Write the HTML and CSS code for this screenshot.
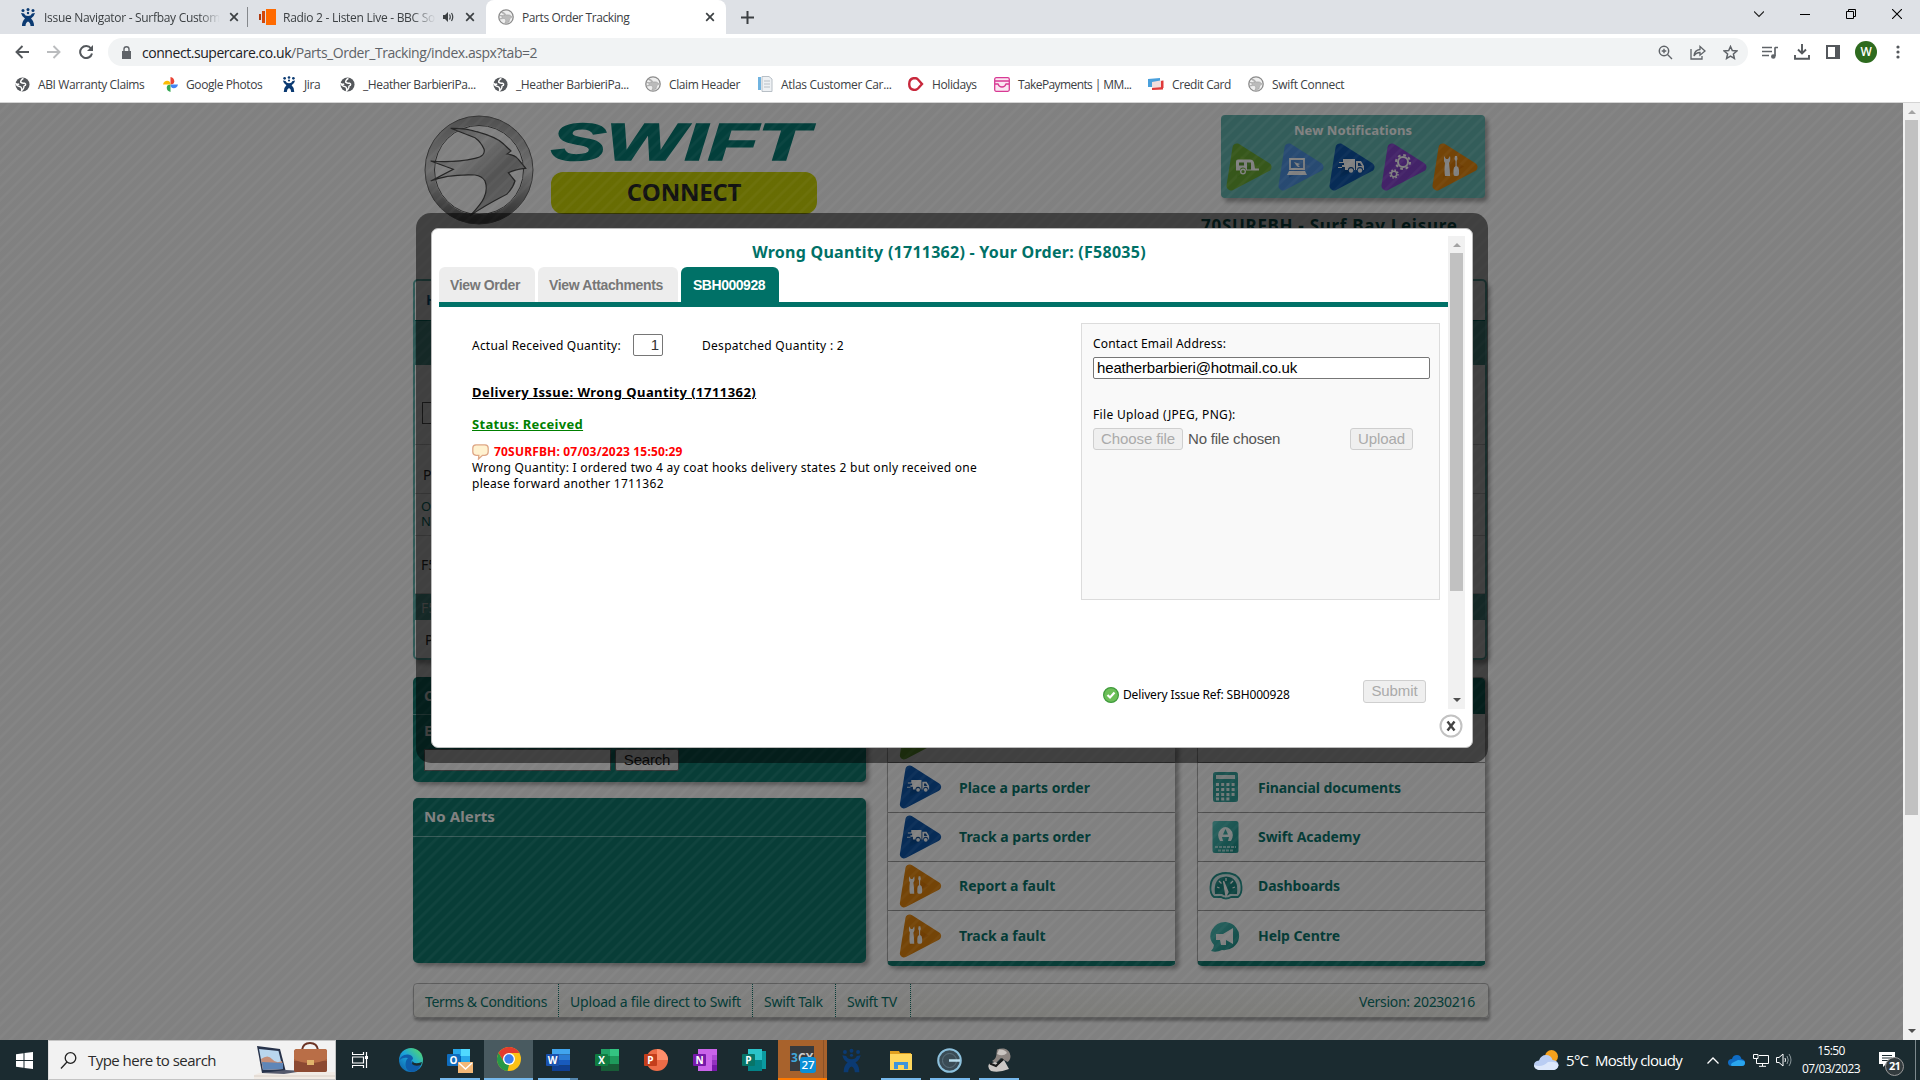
FILE: index.html
```html
<!DOCTYPE html>
<html lang="en">
<head>
<meta charset="utf-8">
<title>Parts Order Tracking</title>
<link rel="stylesheet" href="styles.css">
</head>
<body>
<svg class="defs" width="0" height="0" aria-hidden="true">
  <defs>
    <linearGradient id="g-green" x1="0" y1="1" x2="1" y2="0"><stop offset="0" stop-color="#4f9a1e"/><stop offset="1" stop-color="#8bc53f"/></linearGradient>
    <linearGradient id="g-sky" x1="0" y1="1" x2="1" y2="0"><stop offset="0" stop-color="#1668c4"/><stop offset="1" stop-color="#8fb8ee"/></linearGradient>
    <linearGradient id="g-navy" x1="0" y1="0" x2="0" y2="1"><stop offset="0" stop-color="#0a5fc0"/><stop offset="0.5" stop-color="#003f88"/><stop offset="1" stop-color="#0a5cb4"/></linearGradient>
    <linearGradient id="g-purple" x1="0" y1="0" x2="0" y2="1"><stop offset="0" stop-color="#9a4fe0"/><stop offset="1" stop-color="#6d2fb8"/></linearGradient>
    <linearGradient id="g-orange" x1="0" y1="0" x2="1" y2="1"><stop offset="0" stop-color="#f09010"/><stop offset="0.6" stop-color="#d87400"/><stop offset="1" stop-color="#e88600"/></linearGradient>
    <linearGradient id="g-metal" x1="0" y1="0" x2="1" y2="1"><stop offset="0" stop-color="#8e8e8e"/><stop offset="0.35" stop-color="#e2e2e2"/><stop offset="0.6" stop-color="#a4a4a4"/><stop offset="1" stop-color="#d0d0d0"/></linearGradient>
    <linearGradient id="g-ring" x1="0" y1="0" x2="0" y2="1"><stop offset="0" stop-color="#a0a0a0"/><stop offset="0.5" stop-color="#dadada"/><stop offset="1" stop-color="#5a5a5a"/></linearGradient>
    <linearGradient id="g-teal" x1="0" y1="0" x2="1" y2="1"><stop offset="0" stop-color="#55c8c2"/><stop offset="1" stop-color="#108880"/></linearGradient>
    <linearGradient id="g-edge" x1="0" y1="1" x2="1" y2="0"><stop offset="0" stop-color="#0c59a4"/><stop offset="0.5" stop-color="#1ba5dc"/><stop offset="1" stop-color="#5fe05a"/></linearGradient>
    <symbol id="van" viewBox="0 0 24 16"><path d="M1 12V3Q1 1 3 1H15Q18 1 19 4L20 10H24V12H11A3 3 0 0 0 5 12Z" fill="#fff"/><path d="M4 4H9V7H4ZM12 4H16V11H12Z" fill="#5b9b2c"/><circle cx="8" cy="13" r="2.3" fill="none" stroke="#fff" stroke-width="1.4"/></symbol>
    <symbol id="laptop" viewBox="0 0 20 18"><path d="M3 1H17V11H3Z" fill="none" stroke="#fff" stroke-width="1.8"/><path d="M2 13H18L20 17H0Z" fill="#fff"/><path d="M7 4L13 6L11 7L13 9L11 9L9 7Z" fill="#fff"/></symbol>
    <symbol id="truck" viewBox="0 0 27 16"><path d="M5 1H17V12H16A3 3 0 0 0 10 12H7V9H4V7H6V5H1V4H5ZM18 3H23L26 8V12H25A3 3 0 0 0 19 12H18Z" fill="#fff"/><circle cx="13" cy="12.500" r="2.200" fill="#fff"/><circle cx="22" cy="12.500" r="2.200" fill="#fff"/><path d="M20 5H22L24 8H20Z" fill="#0a4a98"/><path d="M0 9.500H4" stroke="#fff"/></symbol>
    <symbol id="gears" viewBox="0 0 24 26"><g fill="none" stroke="#fff"><circle cx="14" cy="8" r="5" stroke-width="2"/><circle cx="14" cy="8" r="7" stroke-width="2" stroke-dasharray="2.750"/><circle cx="5" cy="20" r="2.700" stroke-width="1.500"/><circle cx="5" cy="20" r="4" stroke-width="1.500" stroke-dasharray="1.570"/></g></symbol>
    <symbol id="tools" viewBox="0 0 16 21"><path d="M0 0L2 3H4L6 0Q7 5 5 7Q6 14 6 20H1Q0 14 1 7Q-1 4 0 0ZM11 0H13L13.500 3L12.700 5V10Q15 11 15 14V18Q15 20 13 20H11Q9.500 20 9.500 18V14Q9.500 11 11.500 10V5L10.500 3Z" fill="#fff"/></symbol>
    <symbol id="tri" viewBox="0 0 46 48"><path d="M11 5L41 24L5 43Z" stroke="inherit" stroke-width="9" stroke-linejoin="round"/></symbol>
    <symbol id="globe" viewBox="0 0 16 16"><circle cx="8" cy="8" r="7.500" fill="#55585c"/><path d="M9 1.500Q6 3 6 5.500Q8 7 10 6.500Q12 7 11 9Q9 9.500 9.500 11Q9 13 7 14.500Q7.500 11.500 6 10.500Q2 10 1 7Q3 8 4.500 7.500" fill="none" stroke="#fff" stroke-width="1.500"/></symbol>
    <symbol id="jira" viewBox="0 0 16 18"><g fill="#0b3a72"><circle cx="3" cy="2.500" r="1.500"/><circle cx="8" cy="1.500" r="1.500"/><circle cx="13" cy="2.500" r="1.500"/><path d="M1 5L4 5.500Q5 8 8 8Q11 8 12 5.500L15 5Q14 9 11 10.500Q14 13 14 18H10.500Q10.500 14.500 8 13.500Q5.500 14.500 5.500 18H2Q2 13 5 10.500Q2 9 1 5Z"/></g><circle cx="8" cy="5" r="1.200" fill="#0b3a72"/></symbol>
    <symbol id="coin" viewBox="0 0 16 16"><circle cx="8" cy="8" r="7.200" fill="#eee" stroke="#8b8b8b" stroke-width="1.300"/><path d="M3 3Q7 3 8 6Q12 5 14 8Q11 9 11 13L7 14Q9 10 6 9.500L2 10L5 8L2 6.500L7 6.500Q5 4 3 3Z" fill="#bbb" stroke="#999" stroke-width=".5"/></symbol>
    <symbol id="close" viewBox="0 0 10 10"><path d="M1.200 1.200L8.800 8.800M8.800 1.200L1.200 8.800" stroke="#3c4043" stroke-width="1.700"/></symbol>
  </defs>
</svg>

<header class="browser">
  <div class="tabstrip">
    <div class="tab tab-one"><svg width="16" height="18"><use href="#jira"/></svg><span class="tab-title">Issue Navigator - Surfbay Custom</span><svg width="10" height="10"><use href="#close"/></svg></div>
    <div class="tab tab-two"><svg width="17" height="16" viewBox="0 0 17 16"><path d="M7 0H17V16H7Z" fill="#ff6a00"/><path d="M3 2H6V14H3Z" fill="#d4480a"/><path d="M0 5H2V11H0Z" fill="#b03a10"/></svg><span class="tab-title">Radio 2 - Listen Live - BBC So</span><svg width="11" height="10" viewBox="0 0 11 10"><path d="M0 3H2L5 0V10L2 7H0Z" fill="#3c4043"/><path d="M6.500 2.500Q8 5 6.500 7.500M8.500 1Q11 5 8.500 9" fill="none" stroke="#3c4043" stroke-width="1.200"/></svg><svg width="10" height="10"><use href="#close"/></svg></div>
    <div class="tab tab-active"><svg width="16" height="16"><use href="#coin"/></svg><span class="tab-title">Parts Order Tracking</span><svg width="10" height="10"><use href="#close"/></svg></div>
    <svg class="newtab" width="13" height="13" viewBox="0 0 13 13"><path d="M6.500 0V13M0 6.500H13" stroke="#3c4043" stroke-width="2"/></svg>
    <div class="winctl">
      <svg width="10" height="10" viewBox="0 0 10 10"><path d="M0 2.500L5 7.500L10 2.500" fill="none" stroke="#222" stroke-width="1.200"/></svg>
      <svg width="10" height="10" viewBox="0 0 10 10"><path d="M0 5.500H10" stroke="#000"/></svg>
      <svg width="10" height="10" viewBox="0 0 10 10"><path d="M.5 2.500H7.500V9.500H.5ZM2.500 2.500V.5H9.500V7.500H7.500" fill="none" stroke="#000"/></svg>
      <svg width="10" height="10" viewBox="0 0 10 10"><path d="M0 0L10 10M10 0L0 10" stroke="#000" stroke-width="1.100"/></svg>
    </div>
  </div>
  <div class="toolbar">
    <div class="nav">
      <svg width="14" height="14" viewBox="0 0 14 14"><path d="M14 7H2M7.500 1L1.500 7L7.500 13" fill="none" stroke="#54585c" stroke-width="1.900"/></svg>
      <svg width="14" height="14" viewBox="0 0 14 14"><path d="M0 7H12M6.500 1L12.500 7L6.500 13" fill="none" stroke="#babcbe" stroke-width="1.900"/></svg>
      <svg width="14" height="14" viewBox="0 0 14 14"><path d="M12 3.500A6 6 0 1 0 13 8.500" fill="none" stroke="#54585c" stroke-width="2"/><path d="M14 0V6H8Z" fill="#54585c"/></svg>
    </div>
    <div class="omnibox">
      <svg width="9" height="13" viewBox="0 0 9 13"><path d="M0 5H9V13H0Z" fill="#5f6368"/><path d="M2 5V3Q2 .8 4.500 .8T7 3V5" fill="none" stroke="#5f6368" stroke-width="1.400"/></svg>
      <span class="url"><b>connect.supercare.co.uk</b>/Parts_Order_Tracking/index.aspx?tab=2</span>
      <svg width="15" height="15" viewBox="0 0 15 15"><circle cx="6" cy="6" r="4.700" fill="none" stroke="#5f6368" stroke-width="1.500"/><path d="M9.500 9.500L14 14M6 3.700V8.300M3.700 6H8.300" stroke="#5f6368" stroke-width="1.400"/></svg>
      <svg width="16" height="15" viewBox="0 0 16 15"><path d="M1 4V14H12V11" fill="none" stroke="#5f6368" stroke-width="1.300"/><path d="M4 11Q4.500 5 10 4.500V1.500L15 6L10 10.200V7.500Q6 7.500 4 11Z" fill="none" stroke="#5f6368" stroke-width="1.300"/></svg>
      <svg width="15" height="15" viewBox="0 0 15 15"><path d="M7.500 1.500L9.300 5.600L13.800 6L10.400 9L11.400 13.400L7.500 11.100L3.600 13.400L4.600 9L1.200 6L5.700 5.600Z" fill="none" stroke="#5f6368" stroke-width="1.500"/></svg>
    </div>
    <div class="tools">
      <svg width="16" height="13" viewBox="0 0 16 13"><path d="M0 1.500H10M0 5.500H10M0 9.500H7M13 1.200V10M13 1.500H16" stroke="#5f6368" stroke-width="1.700"/><circle cx="11.300" cy="10.500" r="2.300" fill="#5f6368"/></svg>
      <svg width="16" height="16" viewBox="0 0 16 16"><path d="M8 0V9M4 5.500L8 9.500L12 5.500M1 11V14.800H15V11" fill="none" stroke="#54585c" stroke-width="1.900"/></svg>
      <svg width="14" height="14" viewBox="0 0 14 14"><path d="M1 1H13V13H1Z" fill="none" stroke="#54585c" stroke-width="2"/><path d="M9 0H14V14H9Z" fill="#54585c"/></svg>
      <span class="avatar">W</span>
      <svg width="4" height="14" viewBox="0 0 4 14"><g fill="#54585c"><circle cx="2" cy="2" r="1.600"/><circle cx="2" cy="7" r="1.600"/><circle cx="2" cy="12" r="1.600"/></g></svg>
    </div>
  </div>
  <nav class="bookmarks">
    <a><svg width="15" height="15"><use href="#globe"/></svg>ABI Warranty Claims</a>
    <a><svg width="15" height="15" viewBox="0 0 16 16"><path d="M8 8V0Q12 1 12 4.500Q12 8 8 8" fill="#ea4335"/><path d="M8 8H16Q15 12 11.500 12Q8 12 8 8" fill="#4285f4"/><path d="M8 8V16Q4 15 4 11.500Q4 8 8 8" fill="#34a853"/><path d="M8 8H0Q1 4 4.500 4Q8 4 8 8" fill="#fbbc04"/></svg>Google Photos</a>
    <a><svg width="14" height="16"><use href="#jira"/></svg>Jira</a>
    <a><svg width="15" height="15"><use href="#globe"/></svg>_Heather BarbieriPa...</a>
    <a><svg width="15" height="15"><use href="#globe"/></svg>_Heather BarbieriPa...</a>
    <a><svg width="16" height="16"><use href="#coin"/></svg>Claim Header</a>
    <a class="tight"><svg width="16" height="16" viewBox="0 0 16 16"><path d="M1 1H4V14H1Z" fill="#6fb3e0"/><path d="M5 .5H12L15 3V15.500H5Z" fill="#eef1f4" stroke="#b8bfc6"/><path d="M7 5H13M7 8H13M7 11H13" stroke="#b8bfc6"/></svg>Atlas Customer Car...</a>
    <a><svg width="16" height="14" viewBox="0 0 16 14"><path d="M10 2.500Q8.500 1 6.500 1Q1.200 1.500 1.200 7T6.500 13Q8.500 13 10 11.500L14 7Z" fill="none" stroke="#c8283c" stroke-width="2.400"/></svg>Holidays</a>
    <a class="tight"><svg width="16" height="15" viewBox="0 0 16 15"><rect x=".7" y=".7" width="14.600" height="13.600" rx="1.500" fill="#fbe6f2" stroke="#d83a94" stroke-width="1.300"/><path d="M1 4H15M1 7H4Q5 10 8 10T12 7H15" fill="none" stroke="#d83a94" stroke-width="1.300"/></svg>TakePayments | MM...</a>
    <a><svg width="16" height="12" viewBox="0 0 16 12"><path d="M0 1L12 0V9H0Z" fill="#4aa0dc"/><path d="M4 4L15 2V11L4 12Z" fill="#f2dede"/><path d="M4 10L15 9V11.500L4 12Z" fill="#e03a3a"/><path d="M13 3L15.500 2.500V10L13 10Z" fill="#e03a3a"/></svg>Credit Card</a>
    <a><svg width="16" height="16"><use href="#coin"/></svg>Swift Connect</a>
  </nav>
</header>

<main class="viewport">
  <div class="page">
    <div class="site">
      <div class="masthead">
        <svg class="crest" width="110" height="110" viewBox="0 0 110 110"><circle cx="55" cy="55" r="49.500" fill="none" stroke="url(#g-ring)" stroke-width="9"/><circle cx="55" cy="55" r="54" fill="none" stroke="#666" stroke-width="1"/><circle cx="55" cy="55" r="44.500" fill="none" stroke="#555" stroke-width="1"/><path d="M26.700 13.300Q42 13 52.700 16.700Q72 22 79.300 28.700L87 36L83 39Q91 40 94 44L101.700 53.300Q92 54 84.300 57.700L91 66Q89 73 82.700 79.300Q58 92 46 101Q58 88 60 82.700Q64 74 61 66Q58 61 51 60Q24 59 6.700 66L29.300 54.300L6.700 46Q30 48 51 43.300Q62 41 60 34Q57 27 51 22.700Z" fill="url(#g-metal)" stroke="#444" stroke-width="1.200"/></svg>
        <div class="brand">
          <svg width="268" height="42" viewBox="0 0 268 42"><text class="wordmark" x="1" y="39" textLength="258" lengthAdjust="spacingAndGlyphs">SWIFT</text></svg>
          <div class="connect">CONNECT</div>
        </div>
        <div class="account">
          <section class="notify">
            <h2>New Notifications</h2>
            <div class="notify-row">
              <span class="tri green"><svg><use href="#tri"/></svg><svg class="glyph" width="24" height="17"><use href="#van"/></svg></span>
              <span class="tri sky"><svg><use href="#tri"/></svg><svg class="glyph" width="20" height="18"><use href="#laptop"/></svg></span>
              <span class="tri navy"><svg><use href="#tri"/></svg><svg class="glyph" width="27" height="16"><use href="#truck"/></svg></span>
              <span class="tri purple"><svg><use href="#tri"/></svg><svg class="glyph" width="24" height="26"><use href="#gears"/></svg></span>
              <span class="tri orange"><svg><use href="#tri"/></svg><svg class="glyph" width="16" height="21"><use href="#tools"/></svg></span>
            </div>
          </section>
          <h1>70SURFBH - Surf Bay Leisure</h1>
        </div>
      </div>

      <section class="orders">
        <div class="orders-top">H</div>
        <div class="orders-band"></div>
        <div class="orders-filter"><span></span></div>
        <div class="orders-line part">P</div>
        <div class="orders-line cols">O<br>N</div>
        <div class="orders-line ref">F5</div>
        <div class="orders-line picked">F5</div>
        <div class="orders-line last">P</div>
      </section>

      <div class="columns">
        <div class="left">
          <section class="card search">
            <h3>C</h3>
            <h4>E</h4>
            <div class="search-row"><span class="field"></span><span class="btn">Search</span></div>
          </section>
          <section class="card alerts"><h3>No Alerts</h3></section>
        </div>
        <section class="menu">
          <div class="menu-head"></div>
          <div class="item"><span class="tri green"><svg><use href="#tri"/></svg></span></div>
          <div class="item"><span class="tri navy"><svg><use href="#tri"/></svg><svg class="glyph" width="23" height="14"><use href="#truck"/></svg></span>Place a parts order</div>
          <div class="item"><span class="tri navy"><svg><use href="#tri"/></svg><svg class="glyph" width="23" height="14"><use href="#truck"/></svg></span>Track a parts order</div>
          <div class="item"><span class="tri orange"><svg><use href="#tri"/></svg><svg class="glyph" width="14" height="19"><use href="#tools"/></svg></span>Report a fault</div>
          <div class="item"><span class="tri orange"><svg><use href="#tri"/></svg><svg class="glyph" width="14" height="19"><use href="#tools"/></svg></span>Track a fault</div>
        </section>
        <section class="menu docs">
          <div class="menu-head"></div>
          <div class="item"></div>
          <div class="item"><svg width="34" height="34" viewBox="0 0 34 34"><rect x="4" y="2" width="25" height="30" rx="2.500" fill="#2f9e98"/><path d="M7 5H26V9H7Z" fill="#e0f0ef"/><g stroke="#e0f0ef" stroke-width="3" stroke-dasharray="3 2.200"><path d="M7 14.500H26M7 19.500H26M7 24.500H26M7 29H21"/></g></svg>Financial documents</div>
          <div class="item"><svg width="34" height="34" viewBox="0 0 34 34"><rect x="3.500" y="1" width="26" height="32" rx="2.500" fill="url(#g-teal)"/><path d="M11 21Q7 14 12 9Q16.500 5 21 9Q26 14 22 21H19L20 17H13L14 21ZM14 14.500H19L16.500 9Z" fill="#f4ffff" fill-rule="evenodd"/><path d="M6 27H27M9 30.500H24" stroke="#9fd8d4" stroke-width="2" stroke-dasharray="3 1"/></svg>Swift Academy</div>
          <div class="item"><svg width="34" height="34" viewBox="0 0 34 34"><path d="M5 28Q1 25 1.500 18Q2 4.500 17 4Q32 4.500 32.500 18Q33 25 29 28H22Q17 31 12 28Z" fill="#d9efee" stroke="#1f938c" stroke-width="1.800"/><path d="M6 25Q4 8 17 7.500Q30 8 28 25H21Q17 28 13 25Z" fill="#17857e"/><path d="M17 27L14.500 12L19 23ZM8 18L10.500 19M10 12L12.500 14.500M24 12L21.500 14.500M26 18L23.500 19M17 9V12" fill="#fff" stroke="#fff" stroke-width="1.300"/></svg>Dashboards</div>
          <div class="item"><svg width="34" height="34" viewBox="0 0 34 34"><path d="M17 3A15 14 0 1 1 13 31Q7 34 2 32Q5 29 5 26A15 14 0 0 1 17 3Z" fill="url(#g-teal)"/><path d="M7 15H14L24 9V25L17 21V26H12L11 21H7Z" fill="#fff"/></svg>Help Centre</div>
        </section>
      </div>

      <footer class="sitefoot"><a class="f1">Terms &amp; Conditions</a><a class="f2">Upload a file direct to Swift</a><a class="f3">Swift Talk</a><a class="f4">Swift TV</a><span>Version: 20230216</span></footer>
    </div>

    <div class="shade"></div>

    <div class="dialog-frame">
      <section class="dialog">
        <div class="dialog-scroll">
          <div class="dialog-body">
            <h2>Wrong Quantity (1711362) - Your Order: (F58035)</h2>
            <div class="dtabs"><span class="t1">View Order</span><span class="t2">View Attachments</span><span class="t3 on">SBH000928</span></div>
            <div class="issue">
              <div class="issue-main">
                <div class="qty"><span class="q-label">Actual Received Quantity:</span><span class="q-input">1</span><span class="q-desp">Despatched Quantity : 2</span></div>
                <h3 class="subject">Delivery Issue: Wrong Quantity (1711362)</h3>
                <h3 class="status">Status: Received</h3>
                <div class="stamp"><svg width="17" height="16" viewBox="0 0 17 16"><path d="M4 .8H13Q16.200 1 16.200 4V8Q16.200 11 13 11.300H10.500L6.500 15L6.800 11.300H4Q.8 11 .8 8V4Q.8 1 4 .8Z" fill="#fff2d0" stroke="#dfa888" stroke-width="1.300"/></svg>70SURFBH: 07/03/2023 15:50:29</div>
                <p>Wrong Quantity: I ordered two 4 ay coat hooks delivery states 2 but only received one<br>please forward another 1711362</p>
              </div>
              <div class="issue-side">
                <div class="contact">
                  <label>Contact Email Address:</label>
                  <span class="email">heatherbarbieri@hotmail.co.uk</span>
                  <label class="up-label">File Upload (JPEG, PNG):</label>
                  <div class="upload"><span class="dbtn w1">Choose file</span><span class="nofile">No file chosen</span><span class="dbtn w2">Upload</span></div>
                </div>
                <div class="submit-row">
                  <svg width="16" height="16" viewBox="0 0 16 16"><circle cx="8" cy="8" r="7.400" fill="#6cbf58" stroke="#3f9a3c" stroke-width="1.200"/><path d="M4.500 8L7 10.500L11.500 5.500" fill="none" stroke="#fff" stroke-width="2.200"/></svg>
                  <span class="ref-text">Delivery Issue Ref: SBH000928</span><span class="dbtn w3">Submit</span>
                </div>
              </div>
            </div>
          </div>
          <div class="scrollbar inner"><i class="up"></i><b></b><i class="down"></i></div>
        </div>
        <div class="dialog-foot"><svg width="24" height="24" viewBox="0 0 24 24"><circle cx="12" cy="12" r="10.500" fill="#fff" stroke="#c2c2c2" stroke-width="2"/><path d="M8.500 7.500L15.500 16.500M15.500 7.500L8.500 16.500" stroke="#444" stroke-width="2.400"/></svg></div>
      </section>
    </div>
  </div>
  <div class="scrollbar outer"><i class="up"></i><b></b><i class="down"></i></div>
</main>

<div class="taskbar">
  <div class="start"><svg width="17" height="17" viewBox="0 0 17 17"><path d="M0 2.300L7.500 1.200V8H0ZM8.500 1L17 0V8H8.500ZM0 9H7.500V15.800L0 14.700ZM8.500 9H17V17L8.500 15.900Z" fill="#fff"/></svg></div>
  <div class="find">
    <svg width="17" height="17" viewBox="0 0 17 17"><circle cx="10.500" cy="6" r="5.300" fill="none" stroke="#222" stroke-width="1.300"/><path d="M7 10L1 16.500" stroke="#222" stroke-width="1.300"/></svg>
    <span>Type here to search</span>
    <svg class="art" width="81" height="38" viewBox="0 0 81 38"><path d="M8 31H81V38H0Z" fill="#ece6df"/><path d="M0 34L8 31H81V38H0Z" fill="#f1ebe5"/><path d="M0 35H81" stroke="#d9cfc6"/><path d="M3 5L26 8L32 31L8 32Z" fill="#27324a"/><path d="M5 8L24.500 10L29 28L9 29Z" fill="#b9d6ee"/><path d="M7 18Q14 13 18 18T28 20L29 28L9 29Z" fill="#c58e78"/><path d="M8 21L29 22L29 28L9 29Z" fill="#5f86b8"/><path d="M8 32L32 29L50 30L30 33Z" fill="#55596c"/><path d="M48 9Q49 2 56 2T64 9" fill="none" stroke="#6b3324" stroke-width="2"/><rect x="40" y="8" width="33" height="23" rx="2.500" fill="#a85f3c"/><path d="M40 20H73V29Q73 31 71 31H42Q40 31 40 29Z" fill="#8c4a32"/><path d="M40 11Q41 8 43 8H71Q73 8 73 11V18Q66 22 56 22T40 18Z" fill="#b96e47"/><path d="M53 19H60V24H53Z" fill="#e0b46c"/></svg>
  </div>
  <div class="taskview"><svg width="17" height="16" viewBox="0 0 17 16"><path d="M.5 0V2.500H11.500V0M.5 16V13.500H11.500V16M.5 5H11.500V11H.5ZM14.500 0V16" fill="none" stroke="#fff" stroke-width="1.200"/><path d="M13 4H16V7H13Z" fill="#fff"/></svg></div>
  <div class="app"><svg width="24" height="24" viewBox="0 0 24 24"><circle cx="12" cy="12" r="12" fill="url(#g-edge)"/><path d="M0 13Q2 6 9 6.500Q14 7 14 11Q12 12 12.500 14Q13.500 17 18 17Q21 17 22.500 16Q20 23 13 24Q7 23 6.500 17Q6.500 12 9 10Q3 9 0 13Z" fill="#0f5dab"/><path d="M13.500 13Q15 17 23 14L22 17Q16 19 13 16Z" fill="#1b2b30"/></svg></div>
  <div class="app run"><svg width="26" height="25" viewBox="0 0 26 25"><path d="M6 1H23V15H6Z" fill="#28a8ea"/><path d="M14 1H23V8H14Z" fill="#50d9ff"/><path d="M6 8H14V17H6Z" fill="#0364b8"/><rect y="6" width="13" height="12" rx="1" fill="#0f6cbd"/><text class="gl" x="6.500" y="16">O</text><path d="M11 14H26V25H11Z" fill="#f4b877"/><path d="M12 15L18.500 21L25 15" fill="none" stroke="#fff" stroke-width="1.500"/></svg></div>
  <div class="app current"><svg width="24" height="24" viewBox="0 0 24 24"><circle cx="12" cy="12" r="12" fill="#fbc116"/><path d="M1.600 6A12 12 0 0 1 22.400 6H12L7 15Z" fill="#e33b2e"/><path d="M1.600 6L7 15Q9 18 12 18L10.500 24A12 12 0 0 1 1.600 6Z" fill="#279847"/><circle cx="12" cy="12" r="6" fill="#fff"/><circle cx="12" cy="12" r="4.700" fill="#3b7ded"/></svg></div>
  <div class="app run two"><svg width="24" height="22" viewBox="0 0 24 22"><path d="M6 0H24V5.500H6Z" fill="#41a5ee"/><path d="M6 5.500H24V11H6Z" fill="#2b7cd3"/><path d="M6 11H24V16.500H6Z" fill="#185abd"/><path d="M6 16.500H24V22H6Z" fill="#103f91"/><rect y="5" width="13" height="12" rx="1" fill="#1a52ae"/><text class="gl" x="6.500" y="15">W</text></svg></div>
  <div class="app"><svg width="24" height="22" viewBox="0 0 24 22"><path d="M6 0H15V11H6Z" fill="#21a366"/><path d="M15 0H24V7H15Z" fill="#33c481"/><path d="M6 7H15V15H6Z" fill="#107c41"/><path d="M15 7H24V15H15Z" fill="#1e9a5c"/><path d="M6 15H24V22H6Z" fill="#185c37"/><rect y="5" width="13" height="12" rx="1" fill="#107c41"/><text class="gl" x="6.500" y="15">X</text></svg></div>
  <div class="app"><svg width="24" height="22" viewBox="0 0 24 22"><circle cx="13" cy="11" r="11" fill="#ed6c47"/><path d="M13 0A11 11 0 0 1 24 11H13Z" fill="#ff8f6b"/><rect y="5" width="13" height="12" rx="1" fill="#c43e1c"/><text class="gl" x="6.500" y="15">P</text></svg></div>
  <div class="app"><svg width="24" height="22" viewBox="0 0 24 22"><path d="M5 0H24V22H5Z" fill="#ca64ea"/><path d="M19 6H24V11H19Z" fill="#ae4bd5"/><path d="M19 11H24V16H19Z" fill="#9332bf"/><path d="M19 16H24V22H19Z" fill="#7719aa"/><rect y="5" width="13" height="12" rx="1" fill="#7719aa"/><text class="gl" x="6.500" y="15">N</text></svg></div>
  <div class="app"><svg width="24" height="22" viewBox="0 0 24 22"><path d="M6 0H20V22H6Z" fill="#2bc3c9"/><path d="M20 2H24V20H20Z" fill="#0b9aa0"/><path d="M6 11H20V22H6Z" fill="#038387"/><rect y="5" width="13" height="12" rx="1" fill="#077568"/><text class="gl" x="6.500" y="15">P</text></svg></div>
  <div class="app pbx"><svg width="26" height="27" viewBox="0 0 26 27"><path d="M0 0H24V25H0Z" fill="#383a3d"/><text class="cx" x="1" y="16"><tspan fill="#3fa7dc">3</tspan>CX</text><rect x="10" y="11" width="16" height="16" rx="3" fill="#0a8fd6"/><text class="badge" x="18" y="23">27</text></svg></div>
  <div class="app"><svg width="21" height="25"><use href="#jira"/></svg></div>
  <div class="app run"><svg width="22" height="19" viewBox="0 0 22 19"><path d="M0 0H9L10 2H21V8H0Z" fill="#e0a020"/><path d="M0 3H22V19H0Z" fill="#ffd75e"/><path d="M4 18V11H18V18H14V14H8V18Z" fill="#3f94dc"/></svg></div>
  <div class="app run"><svg width="25" height="25" viewBox="0 0 25 25"><circle cx="12.500" cy="12.500" r="11.300" fill="#3a4b55" stroke="#8cc0dc" stroke-width="2"/><circle cx="12.500" cy="12.500" r="7" fill="none" stroke="#5b707c" stroke-width="1"/><path d="M12 12.500H23" stroke="#b8dcec" stroke-width="2.500"/></svg></div>
  <div class="app run"><svg width="24" height="24" viewBox="0 0 24 24"><path d="M10 1.500Q13 0 17 .5Q23 2 23.500 8Q23.500 12 20.500 14L14 10L9 15L5 13Q10 10 9.500 5Z" fill="#8b8480"/><path d="M12 1.500Q18 1 20 5Q16 9 10 6Z" fill="#c9c4c0"/><path d="M2 16L8 14L12 16L17 12L22 21Q12 25 4 23Q0 20 2 16Z" fill="#cbc7c4"/><path d="M3 15.500L9 18L16 11" fill="none" stroke="#1a1a1a" stroke-width="2"/></svg></div>
  <div class="tray">
    <svg class="weather" width="25" height="20" viewBox="0 0 25 20"><circle cx="17.500" cy="6.500" r="6.500" fill="#f6a11c"/><path d="M5 20Q0 19 0 15Q0 11 5 10.500Q7 5 12 5Q17 5 18.500 10Q24 10.500 24.500 15Q24 19 20 20Z" fill="#b9cdf3"/><path d="M5 20Q0 19 0 15Q8 18 14 12Q22 11 24.500 15Q24 19 20 20Z" fill="#dde8fb"/></svg>
    <span class="temp">5°C</span><span class="sky-text">Mostly cloudy</span>
    <svg class="chev" width="12" height="7" viewBox="0 0 12 7"><path d="M.5 6.500L6 1L11.500 6.500" fill="none" stroke="#fff" stroke-width="1.300"/></svg>
    <svg class="cloud" width="17" height="11" viewBox="0 0 17 11"><path d="M4 11Q0 11 0 7.500Q0 4 4 4Q5 0 9 0Q12.500 0 13.500 4Q17 4.500 17 7.500Q17 11 13.500 11Z" fill="#0f6cc4"/><path d="M4 11Q2 10 4 8L10 5Q17 5 17 7.500Q17 11 13.500 11Z" fill="#2aa6ee"/></svg>
    <svg class="net" width="16" height="14" viewBox="0 0 16 14"><path d="M6 2.500H15.500V10.500H3.500V6M9.500 10.500V13M6 13.300H13M.5 1.500H5V5.500H.5Z" fill="none" stroke="#fff"/></svg>
    <svg class="vol" width="17" height="14" viewBox="0 0 17 14"><path d="M.5 4.500H3L7 1V13L3 9.500H.5Z" fill="none" stroke="#fff"/><path d="M9 5Q10 7 9 9" fill="none" stroke="#fff"/><path d="M11 3Q13.500 7 11 11M13 1Q17 7 13 13" fill="none" stroke="#8b979b"/></svg>
    <span class="clock"><span>15:50</span><span>07/03/2023</span></span>
    <span class="action"><svg width="16" height="15" viewBox="0 0 16 15"><path d="M0 0H16V12H7L4 15V12H0Z" fill="#fff"/><path d="M3 3.500H13M3 6H13M3 8.500H9" stroke="#1b2b30"/></svg><b>21</b></span>
  </div>
</div>
</body>
</html>
```
FILE: styles.css
```css
* { box-sizing: border-box; }
body { margin: 0; width: 1920px; height: 1080px; overflow: hidden; display: flex; flex-direction: column; font-family: "Noto Sans", sans-serif; background: #fff; }
h1, h2, h3, h4, p { margin: 0; }
svg { flex: none; display: block; }
.defs { position: absolute; }

/* Browser frame */
.browser { height: 103px; flex: none; border-bottom: 1px solid #d4d4d4; font-family: "Open Sans", sans-serif; font-size: 12px; color: #3c4043; letter-spacing: -.4px; }
.tabstrip { height: 34px; display: flex; align-items: center; background: #dee1e6; }
.tab { display: flex; align-items: center; height: 34px; }
.tab-title { flex: 1; white-space: nowrap; margin-right: 9px; }
.tab-one { width: 247px; padding: 0 10px 0 20px; gap: 8px; }
.tab-one .tab-title { letter-spacing: -.3px; -webkit-mask-image: linear-gradient(90deg, #000 88%, transparent); mask-image: linear-gradient(90deg, #000 88%, transparent); margin-right: 1px; }
.tab-two { width: 239px; padding: 0 11px 0 12px; gap: 7px; background: linear-gradient(#85888c, #85888c) 0 center / 1px 20px no-repeat; }
.tab-two .tab-title { letter-spacing: -.28px; -webkit-mask-image: linear-gradient(90deg, #000 84%, transparent); mask-image: linear-gradient(90deg, #000 84%, transparent); margin-right: 0; }
.tab-two svg:last-child { margin-left: 4px; }
.tab-active { width: 240px; padding: 0 11px 0 12px; gap: 8px; background: #fff; border-radius: 8px 8px 0 0; }
.newtab { margin-left: 15px; }
.winctl { margin-left: auto; display: flex; gap: 36px; padding: 0 18px 6px 0; }
.toolbar { height: 36px; display: flex; align-items: center; }
.nav { width: 108px; padding-left: 15px; display: flex; gap: 18px; }
.omnibox { width: 1640px; height: 28px; border-radius: 14px; background: #f1f3f4; display: flex; align-items: center; padding: 0 10px 0 14px; gap: 17px; }
.url { flex: 1; font-size: 14px; letter-spacing: -.45px; margin-left: -6px; color: #5f6368; }
.url b { font-weight: 400; color: #202124; }
.tools { display: flex; align-items: center; gap: 16px; padding-left: 14px; }
.avatar { width: 22px; height: 22px; border-radius: 50%; background: #2e6b1f; color: #fff; font-weight: 600; font-size: 12px; line-height: 22px; text-align: center; margin: 0 3px 0 -1px; }
.bookmarks { height: 28px; padding: 0 0 0 15px; display: grid; grid-template-columns: 148px 119px 58px 153px 152px 112px 151px 86px 154px 100px 110px; align-items: center; }
.bookmarks a { display: flex; align-items: center; gap: 8px; white-space: nowrap; }
.bookmarks .tight { letter-spacing: -.6px; }
.bookmarks a:nth-child(7) { letter-spacing: -.3px; }
.bookmarks a:last-child { letter-spacing: -.33px; }

/* Page behind the dialog */
.viewport { flex: 1; display: flex; min-height: 0; }
.page { width: 1903px; position: relative; overflow: hidden; background: #fff; }
.site { width: 1076px; margin-left: 413px; display: flex; flex-direction: column; }
.masthead { height: 176px; display: flex; padding: 12px 4px 0 11px; }
.brand { width: 268px; margin: 8px 0 0 16px; }
.brand svg { margin-top: -2px; }
.wordmark { font: italic 700 51px "Liberation Sans", sans-serif; fill: #007a73; stroke: #007a73; stroke-width: 1.500px; }
.connect { width: 266px; height: 42px; margin: 9px 0 0 1px; border-radius: 12px; background: #ccd600; color: #202020; font: 700 24px/40px "Open Sans", sans-serif; letter-spacing: -.2px; text-align: center; }
.account { margin-left: auto; width: 264px; }
.notify { height: 83px; border-radius: 4px; background: #62b6b0; box-shadow: 3px 4px 4px #aaa; text-align: center; padding-top: 7px; }
.notify h2 { font-size: 13px; line-height: 17px; color: #fff; letter-spacing: .07px; }
.notify-row { display: flex; gap: 5.500px; padding: 4px 0 0 5px; }
.account h1 { font-size: 17px; line-height: 24px; letter-spacing: .72px; color: #00504a; white-space: nowrap; margin: 16px 0 0 -20px; }
.tri { position: relative; width: 46px; height: 48px; flex: none; display: block; }
.tri > svg:first-child { width: 100%; height: 100%; }
.glyph { position: absolute; left: 9px; top: 15px; }
.green { fill: url(#g-green); stroke: #69ab30; }
.sky { fill: url(#g-sky); stroke: #4a90e0; }
.navy { fill: url(#g-navy); stroke: #0853a8; }
.purple { fill: url(#g-purple); stroke: #8340cc; }
.orange { fill: url(#g-orange); stroke: #e48408; }
.tri .glyph { stroke: none; }
.orders { width: 1074px; height: 381px; border: 2px solid #5cb0aa; border-radius: 5px; box-shadow: 3px 4px 4px #aaa; overflow: hidden; font-size: 14px; color: #222; }
.orders-top { height: 40px; padding: 9px 11px; font-weight: 700; color: #005a8c; border-bottom: 1px solid #007167; }
.orders-band { height: 44px; background: #4f9d97; }
.orders-filter { height: 80px; padding: 37px 7px 0; border-bottom: 1px solid #ccc; }
.orders-filter span { display: block; width: 60px; height: 22px; border: 1px solid #555; }
.orders-line { padding-left: 10px; border-bottom: 1px solid #ccc; }
.part { height: 49px; line-height: 60px; padding-left: 8px; }
.cols { height: 42px; padding: 5px 0 0 6px; line-height: 15px; font-size: 13px; color: #007167; }
.ref { height: 58px; padding-left: 6px; line-height: 34px; padding-top: 12px; }
.picked { height: 26px; padding-left: 6px; line-height: 27px; background: #4f9d97; color: #ddd; border: 0; }
.last { border: 0; line-height: 39px; }
.columns { display: flex; margin-top: 17px; height: 289px; }
.left { width: 453px; margin-right: 21px; display: flex; flex-direction: column; gap: 16px; }
.card { background: #0a766a; border-radius: 5px; box-shadow: 3px 3px 4px #aaa; color: #fff; }
.card h3 { height: 38px; line-height: 37px; padding-left: 11px; font-size: 15px; letter-spacing: .1px; border-bottom: 1px solid #6fb5ae; }
.card h4 { padding-left: 11px; font-size: 15px; line-height: 30px; height: 34px; }
.search { height: 105px; }
.alerts { height: 165px; }
.alerts h3 { height: 39px; }
.search-row { display: flex; gap: 4px; padding-left: 11px; font: 15px/19px "Liberation Sans", sans-serif; }
.field { width: 187px; height: 22px; background: #fff; border: 1px solid #666; }
.btn { width: 64px; height: 22px; background: #efefef; border: 1px solid #666; border-radius: 2px; color: #111; text-align: center; letter-spacing: -.2px; }
.menu { width: 289px; height: 289px; border: 1px solid #aaa; border-bottom: 5px solid #0a766a; border-radius: 5px; box-shadow: 3px 3px 4px #aaa; margin-right: 21px; overflow: hidden; }
.docs { margin-right: 0; }
.menu-head { height: 36px; background: #0a766a; }
.item { height: 49.250px; padding-left: 11px; display: flex; align-items: center; border-bottom: 1px solid #999; color: #007167; font-weight: 700; font-size: 14px; }
.item:last-child { border: 0; }
.item > svg { margin: 0 15px 0 0; }
.docs .item { letter-spacing: -.06px; }
.item .tri { width: 43px; height: 44px; margin-right: 17px; }
.item .glyph { left: 8px; top: 14px; }
.item .orange .glyph { left: 10px; top: 12px; }
.orange .glyph { left: 12px; top: 13px; }
.purple .glyph { left: 8px; top: 11px; }
.sitefoot { display: flex; width: 1076px; height: 35px; margin-top: 17px; border: 1px solid #b5b5b5; border-radius: 4px; box-shadow: 1px 3px 3px #aaa; background: linear-gradient(#fff, #f6f6ef); color: #007167; font-size: 14px; line-height: 35px; letter-spacing: -.28px; }
.sitefoot a { border-right: 1px dotted #007167; padding-left: 11px; white-space: nowrap; }
.f1 { width: 145px; letter-spacing: -.36px; }
.f2 { width: 194px; letter-spacing: -.19px; }
.f3 { width: 83px; }
.f4 { width: 75px; }
.sitefoot span { margin-left: auto; padding-right: 13px; }
.shade { position: absolute; inset: 0; background: repeating-linear-gradient(135deg, rgba(255,255,255,.01) 0 4.800px, rgba(255,255,255,.045) 6px 7.600px, rgba(255,255,255,.01) 8.840px), rgba(0,0,0,.5); }

/* Dialog */
.dialog-frame { position: absolute; left: 416px; top: 110px; width: 1072px; height: 550px; padding: 15px; border-radius: 15px; background: rgba(0,0,0,.5); }
.dialog { width: 1042px; height: 520px; border: 1px solid #bbb; border-radius: 7px; background: #fff; padding: 7px 7px 0; }
.dialog-scroll { display: flex; height: 473px; }
.dialog-body { width: 1009px; color: #000; font-size: 12px; }
.dialog-body h2 { font-size: 16px; line-height: 32px; height: 31px; letter-spacing: .26px; color: #007167; text-align: center; padding-left: 11px; }
.dtabs { display: flex; gap: 3px; height: 40px; border-bottom: 5px solid #007167; font: 700 14px/36px "Liberation Sans", sans-serif; letter-spacing: -.37px; color: #777; }
.dtabs span { background: #ededed; border-radius: 6px 6px 0 0; padding-left: 11px; height: 35px; }
.t1 { width: 96px; }
.t2 { width: 140px; }
.t3 { width: 98px; letter-spacing: -.47px; }
.dtabs .on { background: #007167; color: #fff; padding-left: 12px; }
.issue { display: flex; justify-content: space-between; }
.issue-main { padding: 27px 0 0 33px; }
.qty { display: flex; align-items: center; height: 22px; }
.q-label { width: 161px; letter-spacing: .22px; }
.q-input { width: 30px; height: 22px; border: 1px solid #767676; border-radius: 2px; font: 15px/20px "Liberation Sans", sans-serif; text-align: right; padding-right: 3px; color: #333; }
.q-desp { margin-left: 39px; letter-spacing: .29px; }
.dialog-body h3 { font-size: 13px; text-decoration: underline; }
.subject { letter-spacing: .45px; line-height: 20px; margin-top: 26px; }
.status { letter-spacing: .3px; line-height: 20px; margin-top: 12px; color: #008000; }
.stamp { display: flex; align-items: center; gap: 5px; height: 17px; margin-top: 9px; color: #f00; font-weight: 700; letter-spacing: .18px; }
.issue p { line-height: 16px; letter-spacing: .28px; }
.issue-side { width: 367px; padding: 16px 8px 0 0; }
.contact { width: 359px; height: 277px; border: 1px solid #dcdcdc; background: #f9f9f9; padding: 10px 10px 0 11px; }
.contact label { display: block; line-height: 20px; letter-spacing: .18px; }
.email { display: block; width: 337px; height: 22px; margin-top: 3px; border: 1px solid #767676; border-radius: 2px; background: #fff; font: 15px/20px "Liberation Sans", sans-serif; letter-spacing: -.15px; padding-left: 3px; }
.contact .up-label { margin-top: 26px; letter-spacing: .32px; }
.upload { display: flex; align-items: center; margin-top: 3px; }
.dbtn { height: 22px; border: 1px solid #cfcfcf; border-radius: 3px; background: #efefef; color: #aaa; font: 15px/20px "Liberation Sans", sans-serif; letter-spacing: -.1px; text-align: center; }
.w1 { width: 90px; }
.w2 { width: 63px; }
.w3 { width: 63px; height: 23px; margin-left: auto; margin-top: -7px; }
.nofile { width: 162px; margin-left: 5px; font: 15px/20px "Liberation Sans", sans-serif; letter-spacing: -.2px; color: #555; }
.submit-row { display: flex; align-items: center; margin: 86px 14px 0 22px; }
.ref-text { margin-left: 4px; letter-spacing: -.14px; }
.dialog-foot { display: flex; justify-content: flex-end; padding: 5px 2px 0 0; }

/* Scrollbars */
.scrollbar { width: 17px; background: #f1f1f1; display: flex; flex-direction: column; align-items: center; }
.scrollbar b { width: 13px; background: #c1c1c1; }
.scrollbar i { width: 0; height: 0; border: 4px solid transparent; }
.scrollbar .up { border-top: 0; border-bottom-color: #a3a3a3; margin: 7px 0 6px; }
.scrollbar .down { border-bottom: 0; border-top-color: #505050; margin: auto 0 7px; }
.inner b { height: 338px; }
.outer b { height: 695px; }

/* Taskbar */
.taskbar { height: 40px; flex: none; display: flex; background: #1b2b30; color: #fff; font-family: "Open Sans", sans-serif; }
.start { width: 48px; display: grid; place-items: center; }
.find { width: 288px; display: flex; align-items: center; background: #f2f2f2; border: 1px solid #c4c4c4; border-left: 1px solid #ddd; padding-left: 11px; color: #2b2b2b; font-size: 15px; letter-spacing: -.53px; }
.find span { margin-left: 11px; white-space: nowrap; }
.art { margin-left: auto; }
.taskview { width: 50px; padding-left: 16px; display: flex; align-items: center; }
.app { width: 49px; display: grid; place-items: center; }
.run { background: linear-gradient(#76b9ed, #76b9ed) center bottom / 40px 2px no-repeat; }
.two { background: linear-gradient(90deg, #76b9ed 80%, #5486ad 80%) center bottom / 40px 2px no-repeat; }
.current { background: #495a60; border-bottom: 2px solid #76b9ed; }
.pbx { background: linear-gradient(90deg, #a8622c 91%, #8a5228 91% 93%, #a8622c 93%); border-bottom: 2px solid #ff7a00; }
.gl { font: 700 10px "Open Sans", sans-serif; fill: #fff; text-anchor: middle; }
.cx { font: 700 12px "Open Sans", sans-serif; fill: #ccc; }
.badge { font: 600 11.500px "Open Sans", sans-serif; fill: #fff; text-anchor: middle; }
.tray { margin-left: auto; width: 386px; display: flex; align-items: center; font-size: 15px; letter-spacing: -.7px; white-space: nowrap; }
.temp { width: 30px; padding-left: 7px; }
.sky-text { width: 118px; padding-left: 6px; }
.cloud { margin-left: 9px; }
.net { margin-left: 8px; }
.vol { margin-left: 7px; }
.clock { display: flex; flex-direction: column; width: 62px; margin-left: 7px; text-align: center; font-size: 12px; line-height: 18px; letter-spacing: -.57px; }
.action { position: relative; margin-left: 17px; width: 37px; height: 40px; padding-top: 12px; border-right: 1px solid #7d898d; }
.action b { position: absolute; left: 6px; top: 17px; width: 19px; height: 19px; border-radius: 50%; border: 1px solid #999; background: #333b3e; font-size: 11px; line-height: 16px; text-align: center; }
```
